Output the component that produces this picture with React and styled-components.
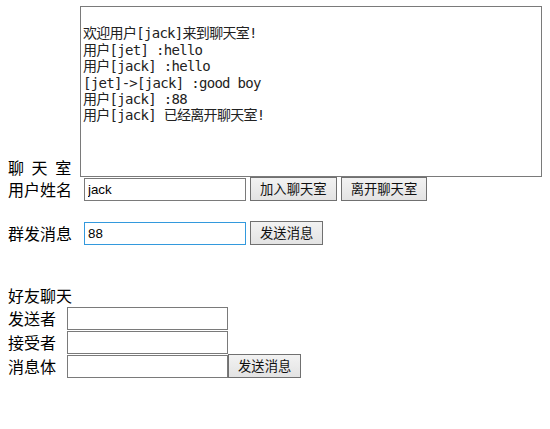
import React, { useState } from 'react';
import styled, { createGlobalStyle } from 'styled-components';

const GlobalStyle = createGlobalStyle`
  body {
    margin: 0;
    background: #fff;
    font-family: "Noto Sans CJK SC", "Liberation Sans", sans-serif;
    font-size: 16px;
    color: #000;
  }
`

const Page = styled.div`
  padding: 6px 8px 0 8px;
`

const Row = styled.div`
  display: flex;
  align-items: ${p => (p.bottom ? 'flex-end' : 'center')};
  height: ${p => p.height || 24}px;
  margin-top: ${p => p.top || 0}px;
`

const Label = styled.span`
  width: ${p => p.width}px;
  flex-shrink: 0;
  line-height: 20px;
  font-size: 16px;
  white-space: pre;
  word-spacing: ${p => p.spread || 0}px;
`

const Heading = styled.div`
  margin-top: ${p => p.top}px;
  line-height: 22px;
  font-size: 16px;
`

const ChatLog = styled.textarea`
  box-sizing: border-box;
  width: 463px;
  height: 171px;
  margin: 0;
  padding: 2px 2px;
  border: 1px solid #7a7a7a;
  resize: none;
  outline: none;
  font-family: "DejaVu Sans Mono", "Noto Sans CJK SC", monospace;
  font-size: 14px;
  letter-spacing: -0.7px;
  line-height: 16.4px;
  color: #222;
  overflow: hidden;
`

const Input = styled.input`
  box-sizing: border-box;
  width: ${p => p.width || 162}px;
  height: 23px;
  margin: 0;
  padding: 1px 3px;
  border: 1px solid ${p => (p.focused ? '#3399dd' : '#7a7a7a')};
  outline: none;
  font-family: "Liberation Sans", Arial, sans-serif;
  font-size: 13.33px;
  color: #000;
`

const Button = styled.button`
  box-sizing: border-box;
  height: 24px;
  margin: 0 0 0 ${p => (p.gap === undefined ? 4 : p.gap)}px;
  padding: 0 9px;
  border: 1px solid #707070;
  border-radius: 0;
  background: linear-gradient(#f2f2f2, #e3e3e3);
  font-family: "Noto Sans CJK SC", sans-serif;
  font-size: 13.33px;
  line-height: 20px;
  color: #111;
  white-space: nowrap;
`

const log = [
  '',
  '欢迎用户[jack]来到聊天室!',
  '用户[jet] :hello',
  '用户[jack] :hello',
  '[jet]->[jack] :good boy',
  '用户[jack] :88',
  '用户[jack] 已经离开聊天室!',
].join('\n')

export default function App() {
  const [name, setName] = useState('jack')
  const [msg, setMsg] = useState('88')

  return (
    <Page>
      <GlobalStyle />
      <Row bottom height={171}>
        <Label width={72} spread={4}>聊 天 室</Label>
        <ChatLog readOnly value={log} />
      </Row>
      <Row height={24}>
        <Label width={76}>用户姓名</Label>
        <Input value={name} onChange={e => setName(e.target.value)} />
        <Button>加入聊天室</Button>
        <Button>离开聊天室</Button>
      </Row>
      <Row height={24} top={20}>
        <Label width={76}>群发消息</Label>
        <Input focused value={msg} onChange={e => setMsg(e.target.value)} />
        <Button>发送消息</Button>
      </Row>
      <Heading top={39}>好友聊天</Heading>
      <Row height={24}>
        <Label width={59}>发送者</Label>
        <Input width={161} />
      </Row>
      <Row height={24}>
        <Label width={59}>接受者</Label>
        <Input width={161} />
      </Row>
      <Row height={24}>
        <Label width={59}>消息体</Label>
        <Input width={161} />
        <Button gap={0}>发送消息</Button>
      </Row>
    </Page>
  )
}
